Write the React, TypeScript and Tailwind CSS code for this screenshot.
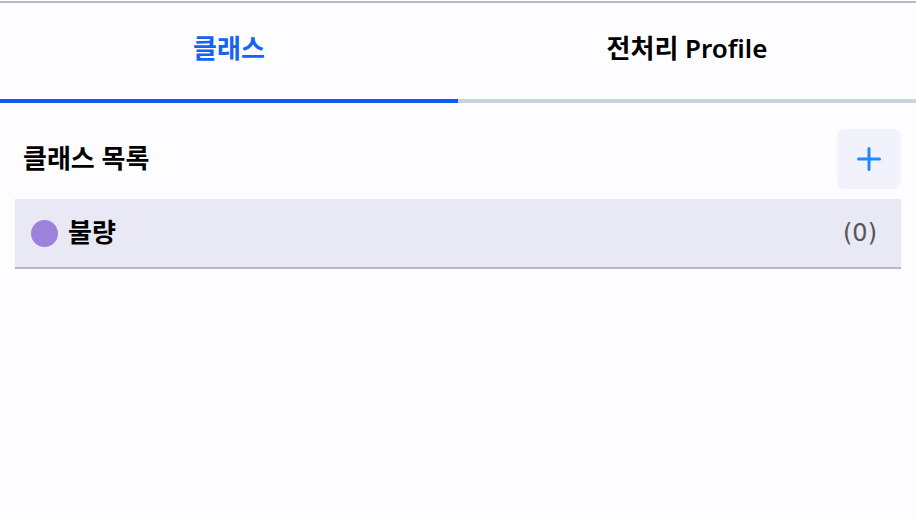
const classes = [{ name: "불량", color: "#9d82db", count: 0 }];

function PlusIcon() {
	return (
		<svg width="24" height="24" viewBox="0 0 24 24" fill="none">
			<path d="M12 1.5v21M1.5 12h21" stroke="currentColor" strokeWidth="3" strokeLinecap="round" />
		</svg>
	);
}

export default function App() {
	return (
		<div
			className="h-[520px] w-[916px] bg-[#fdfdff] pt-px"
			style={{ fontFamily: '"Noto Sans", "Noto Sans CJK KR", sans-serif' }}
		>
			<div className="h-[2px] bg-[#b9b9c3]" />

			{/* Tabs */}
			<div className="flex">
				<button
					type="button"
					className="flex h-[100px] flex-1 items-center justify-center border-b-4 border-[#0b5cf5] pb-1.5 text-[26px] font-bold text-[#1563f2]"
				>
					클래스
				</button>
				<button
					type="button"
					className="flex h-[100px] flex-1 items-center justify-center border-b-4 border-[#c8d4df] pb-1.5 text-[26px] font-semibold text-black"
				>
					전처리 Profile
				</button>
			</div>

			{/* Class list */}
			<div className="px-[15px] pt-[26px]">
				<div className="flex items-center justify-between">
					<div className="pl-[8px] pb-0.5 text-[26px] font-bold text-black">클래스 목록</div>
					<button
						type="button"
						className="flex h-[60px] w-[64px] items-center justify-center rounded-lg bg-[#f1f2fb] text-[#1a8cff]"
					>
						<PlusIcon />
					</button>
				</div>
				<div className="mt-[10px]">
					{classes.map((c) => (
						<div
							key={c.name}
							className="flex h-[70px] items-center justify-between border-b-2 border-[#b8b8c4] bg-[#e9e9f5] pl-4 pr-6"
						>
							<div className="flex items-center gap-[10px]">
								<span
									className="h-[27px] w-[27px] rounded-full"
									style={{ backgroundColor: c.color }}
								/>
								<span className="pb-0.5 text-[26px] font-bold text-black">{c.name}</span>
							</div>
							<span
								className="text-[24px] text-[#555]"
								style={{ fontFamily: '"DejaVu Sans", sans-serif' }}
							>
								({c.count})
							</span>
						</div>
					))}
				</div>
			</div>
		</div>
	);
}
